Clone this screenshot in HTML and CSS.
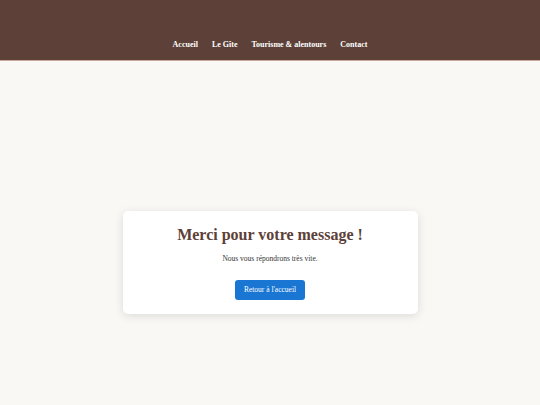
FILE: index.html
```html
<!DOCTYPE html>
<html lang="fr">
<head>
<meta charset="utf-8">
<title>Merci</title>
<link rel="stylesheet" href="styles.css">
</head>
<body>
<header class="site-header">
  <nav class="nav">
    <a href="#">Accueil</a>
    <a href="#">Le Gîte</a>
    <a href="#">Tourisme &amp; alentours</a>
    <a href="#">Contact</a>
  </nav>
</header>
<main class="main">
  <div class="card">
    <h1 class="title">Merci pour votre message !</h1>
    <p class="text">Nous vous répondrons très vite.</p>
    <a class="btn" href="#">Retour à l'accueil</a>
  </div>
</main>
</body>
</html>
```
FILE: styles.css
```css
html, body { margin: 0; padding: 0; }
body {
  background: #faf8f4;
  font-family: "Liberation Serif", serif;
  color: #333;
  min-height: 405px;
}
.site-header {
  background: #5d4037;
  height: 61px;
  border-bottom: 1px solid #c8a99c;
  display: flex;
  align-items: flex-end;
  justify-content: center;
  box-sizing: border-box;
}
.nav {
  display: flex;
  gap: 14px;
  padding-bottom: 11px;
}
.nav a {
  color: #fff;
  text-decoration: none;
  font-weight: bold;
  font-size: 8px;
}
.main {
  display: flex;
  justify-content: center;
  padding-top: 150px;
}
.card {
  background: #fff;
  width: 295px;
  box-sizing: border-box;
  border-radius: 5px;
  box-shadow: 0 2px 10px rgba(0,0,0,0.12);
  text-align: center;
  padding: 15px 0 14px;
}
.title {
  margin: 0;
  font-size: 16px;
  line-height: 18px;
  color: #5d4037;
  font-weight: bold;
}
.text {
  margin: 10px 0 15px;
  font-size: 7.5px;
  line-height: 9px;
  color: #333;
}
.btn {
  display: inline-block;
  background: #1976d2;
  color: #fff;
  text-decoration: none;
  font-size: 7.5px;
  line-height: 9px;
  padding: 5.5px 9px;
  border-radius: 3px;
}
```
